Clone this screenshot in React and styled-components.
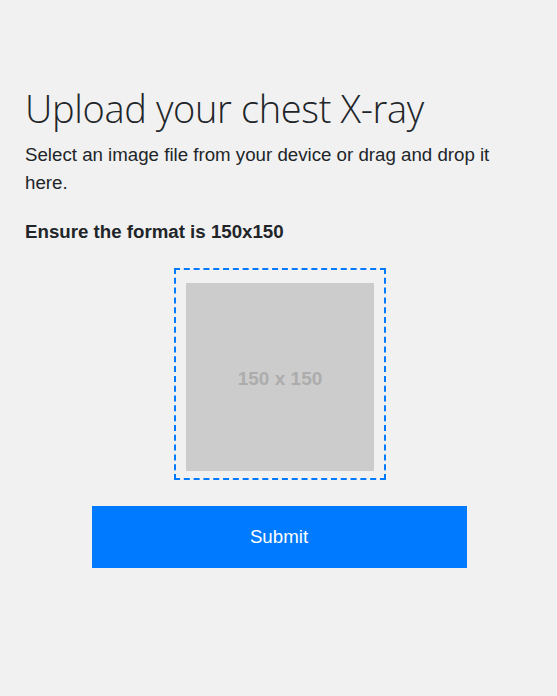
import React from "react";
import styled, { createGlobalStyle } from "styled-components";

const Global = createGlobalStyle`
  html, body { margin: 0; padding: 0; background: #f1f1f1; }
  body { font-family: "Liberation Sans", Arial, sans-serif; color: #212529; }
`;

const Page = styled.main`
  box-sizing: border-box;
  width: 557px;
  min-height: 696px;
  padding: 84px 24px 0 25px;
  background: #f1f1f1;
`;

const Title = styled.h1`
  margin: 0;
  font-family: "Open Sans", "Noto Sans", sans-serif;
  font-weight: 300;
  font-size: 38px;
  line-height: 48px;
  color: #212529;
  letter-spacing: -0.35px;
`;

const Lead = styled.p`
  margin: 9px 0 0;
  font-size: 18.7px;
  line-height: 28px;
  color: #212529;
`;

const Note = styled.p`
  margin: 21px 0 0;
  font-size: 18.7px;
  font-weight: bold;
  line-height: 28px;
  color: #212529;
`;

const Center = styled.div`
  display: flex;
  flex-direction: column;
  align-items: center;
`;

const DropZone = styled.label`
  margin: 22px 0 0 2px;
  box-sizing: border-box;
  width: 212px;
  height: 212px;
  padding: 13px 10px 7px;
  border: 2px dashed #007bff;
  display: flex;
  cursor: pointer;
`;

const Placeholder = styled.div`
  flex: 1;
  background: #cccccc;
  display: flex;
  align-items: center;
  justify-content: center;
  color: #acacac;
  font-size: 19px;
  font-weight: bold;
  padding-top: 4px;
`;

const SubmitButton = styled.button`
  margin-top: 26px;
  width: 375px;
  height: 62px;
  border: none;
  background: #007bff;
  color: #ffffff;
  font-family: "Liberation Sans", Arial, sans-serif;
  font-size: 18.7px;
  cursor: pointer;
`;

export default function App() {
  return (
    <>
      <Global />
      <Page>
        <Title>Upload your chest X-ray</Title>
        <Lead>Select an image file from your device or drag and drop it here.</Lead>
        <Note>Ensure the format is 150x150</Note>
        <Center>
          <DropZone>
            <Placeholder>150 x 150</Placeholder>
          </DropZone>
          <SubmitButton>Submit</SubmitButton>
        </Center>
      </Page>
    </>
  );
}
